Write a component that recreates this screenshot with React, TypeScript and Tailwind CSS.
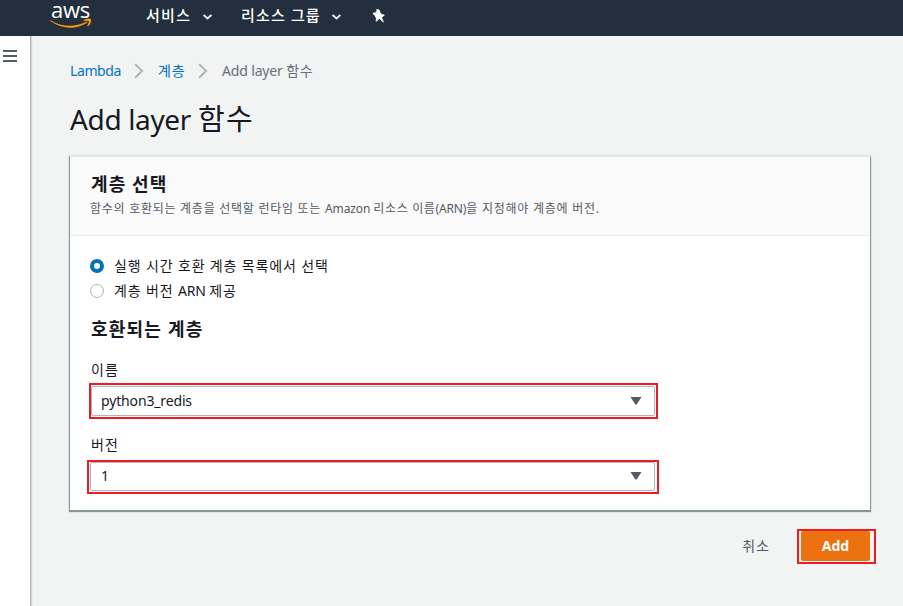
import React from "react";

function Chevron() {
  return (
    <svg className="h-[16px] w-[10px]" viewBox="0 0 10 16" fill="none" stroke="#aab7b8" strokeWidth="2">
      <path d="M1.2 1.2L8 8L1.2 14.8" />
    </svg>
  );
}

function Caret() {
  return (
    <svg className="h-[6px] w-[9px]" viewBox="0 0 9 6" fill="none" stroke="#e8eaed" strokeWidth="1.9">
      <path d="M0.6 0.9L4.5 4.5L8.4 0.9" />
    </svg>
  );
}

function SelectBox({ value, className = "" }: { value: string; className?: string }) {
  return (
    <div className={`flex h-full w-full items-center justify-between rounded-[2px] border border-[#aab7b8] bg-white pr-[12px] ${className}`}>
      <span className="text-[14px] leading-[22px] tracking-[-0.15px] text-[#16191f]">{value}</span>
      <svg className="h-[8px] w-[12px]" viewBox="0 0 12 8">
        <path d="M0.5 0H11.5L6.8 7.2Q6 8 5.2 7.2Z" fill="#545b64" />
      </svg>
    </div>
  );
}

export default function App() {
  return (
    <div className="h-[606px] w-[903px] overflow-hidden bg-[#f2f3f3] font-['Noto_Sans','Noto_Sans_CJK_KR',sans-serif] text-[#16191f]">
      <header className="flex h-[36px] items-start bg-[#232f3e] text-white">
        <div className="ml-[50px] flex h-[30px] w-[42px] flex-col">
          <span className="h-[18px] whitespace-nowrap pl-px font-['Open_Sans',sans-serif] text-[22px] font-medium leading-[18px] tracking-[-0.2px]">aws</span>
          <svg className="h-[11px] w-[42px]" viewBox="0 0 42 11" fill="#ff9900">
            <path d="M0.4 2.2Q18 12.5 36.6 3.8Q37.8 3.6 37.2 4.8Q19 15.5 0.2 3Q-.2 2.2.4 2.2Z" />
            <path d="M33.6 2Q38.5-.6 40.9 1.2Q41.8 5 38 8.6L37.2 8.1Q39.4 4 38.6 3.1Q37 2.4 34 3Z" />
          </svg>
        </div>
        <nav className="flex h-[30px] items-center text-[15px] font-medium leading-[22px]">
          <span className="-mt-px ml-[54px] w-[45px] whitespace-nowrap tracking-[1.3px]">서비스</span>
          <span className="ml-[12px] mt-[4px] flex"><Caret /></span>
          <span className="-mt-px ml-[29px] w-[79px] whitespace-nowrap tracking-[1.15px]">리소스 그룹</span>
          <span className="ml-[12px] mt-[4px] flex"><Caret /></span>
          <svg className="ml-[31px] mt-px h-[14px] w-[14px]" viewBox="0 0 14 14" fill="#fff">
            <path d="M4.4 0.3L6.2 0L8.2 2.1L8 3.1L10 5.3L12.2 5.4L12.6 6.4L10 8.6L11.8 13L11.2 13.4L7.4 9.8L4.6 12.6L3.6 12.4L4 9.4L2.8 6.8L0.8 4.8L1 3.8L3.2 3.4L4.3 2.2Z" />
          </svg>
        </nav>
      </header>

      <div className="flex h-[570px]">
        <aside className="w-[31px] shrink-0 border-r border-[#aab7b8] bg-white shadow-[1px_0_1px_rgba(0,28,36,0.12)]">
          <div className="ml-[3px] mt-[14px] flex w-[14px] flex-col gap-[3px]">
            <i className="h-[2px] bg-[#545b64]" />
            <i className="h-[2px] bg-[#545b64]" />
            <i className="h-[2px] bg-[#545b64]" />
          </div>
        </aside>

        <main className="ml-[38px] w-[807px]">
          <div className="mt-[24px] flex h-[22px] items-center whitespace-nowrap text-[14px] leading-[22px]">
            <span className="ml-[1px] w-[51px] tracking-[-0.4px] text-[#0073bb]">Lambda</span>
            <span className="ml-[13px] flex"><Chevron /></span>
            <span className="ml-[14px] w-[28px] tracking-[0.8px] text-[#0073bb]">계층</span>
            <span className="ml-[12px] flex"><Chevron /></span>
            <span className="ml-[14px] text-[#687078]"><span className="tracking-[-0.15px]">Add layer </span><span className="tracking-[0.7px]">함수</span></span>
          </div>
          <h1 className="ml-[1px] mt-[19px] h-[36px] whitespace-nowrap text-[28px] leading-[36px]">
            <span className="tracking-[-0.35px]">Add layer </span>
            <span className="text-[29px] tracking-[1.4px]">함수</span>
          </h1>

          <section className="mt-[19px] h-[356px] w-[802px] border border-b-2 border-[#879596] border-t-[#e3e7e7] bg-white shadow-[0_0_1px_1px_rgba(0,28,36,0.06)]">
            <div className="h-[79px] border-b border-[#eaeded] bg-[#fafafa] pl-[21px] pt-[16px]">
              <h2 className="whitespace-nowrap text-[18px] font-bold leading-[22px] tracking-[1.1px]">계층 선택</h2>
              <p className="-ml-px mt-[5px] whitespace-nowrap text-[12px] leading-[18px] text-[#545b64]">
                <span className="tracking-[0.73px]">함수의 호환되는 계층을 선택할 런타임 또는 </span>
                <span className="tracking-[-0.1px]">Amazon </span>
                <span className="tracking-[0.65px]">리소스 이름</span>
                <span className="tracking-[-0.15px]">(ARN)</span>
                <span className="tracking-[0.75px]">을 지정해야 계층에 버전.</span>
              </p>
            </div>
            <div className="pt-[19px]">
              <div className="ml-[20px] flex h-[22px] items-center">
                <span className="h-[14px] w-[14px] rounded-full border-[4px] border-[#0073bb] bg-white" />
                <span className="ml-[10px] whitespace-nowrap text-[14px] leading-[22px] tracking-[0.85px]">실행 시간 호환 계층 목록에서 선택</span>
              </div>
              <div className="ml-[20px] mt-[3px] flex h-[22px] items-center">
                <span className="h-[14px] w-[14px] rounded-full border border-[#aab7b8] bg-white" />
                <span className="ml-[10px] whitespace-nowrap text-[14px] leading-[22px]">
                  <span className="tracking-[0.85px]">계층 버전 </span>
                  <span className="tracking-[-0.15px]">ARN </span>
                  <span className="tracking-[0.85px]">제공</span>
                </span>
              </div>
              <h2 className="ml-[21px] mt-[16px] whitespace-nowrap text-[18px] font-bold leading-[22px] tracking-[1.2px]">호환되는 계층</h2>
              <div className="ml-[21px] mt-[19px] text-[14px] leading-[22px] tracking-[1px]">이름</div>
              <div className="ml-[19px] mt-[2px] h-[36px] w-[569px] border-2 border-[#ed1c24] pb-px pr-px pt-px">
                <SelectBox value="python3_redis" className="pl-[9px]" />
              </div>
              <div className="ml-[21px] mt-[15px] text-[14px] leading-[22px] tracking-[1px]">버전</div>
              <div className="ml-[17px] mt-[4px] h-[34px] w-[572px] border-2 border-[#ed1c24] pb-px pl-px pr-[2px]">
                <SelectBox value="1" className="pb-px pl-[10px]" />
              </div>
            </div>
          </section>

          <footer className="mt-[17px] flex h-[35px] items-center justify-end">
            <span className="mb-[2px] mr-[27px] text-[14px] leading-[22px] tracking-[1px] text-[#545b64]">취소</span>
            <div className="h-[35px] w-[79px] border-2 border-[#ed1c24] pb-px pl-[2px] pr-[4px]">
              <button className="flex h-full w-full items-center justify-center rounded-[2px] bg-[#ec7211] text-[14px] font-bold leading-[22px] text-white">Add</button>
            </div>
          </footer>
        </main>
      </div>
    </div>
  );
}
